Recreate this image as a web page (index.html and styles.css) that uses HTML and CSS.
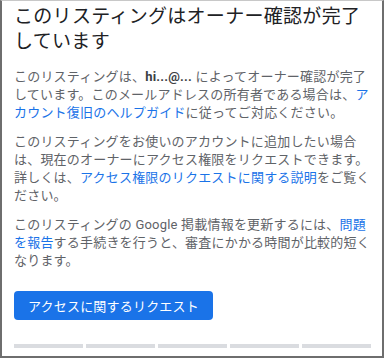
FILE: index.html
```html
<!DOCTYPE html>
<html lang="ja">
<head>
  <meta charset="UTF-8">
  <meta name="viewport" content="width=device-width, initial-scale=1.0">
  <title>オーナー確認</title>
  <link rel="stylesheet" href="styles.css">
</head>
<body>
  <div class="card">
    <h1 class="title">このリスティングはオーナー確認が完了しています</h1>

    <p class="text">このリスティングは、<b>hi...@...</b> によってオーナー確認が完了しています。このメールアドレスの所有者である場合は、<a href="#">アカウント復旧のヘルプガイド</a>に従ってご対応ください。</p>

    <p class="text">このリスティングをお使いのアカウントに追加したい場合は、現在のオーナーにアクセス権限をリクエストできます。詳しくは、<a href="#">アクセス権限のリクエストに関する説明</a>をご覧ください。</p>

    <p class="text">このリスティングの Google 掲載情報を更新するには、<a href="#">問題を報告</a>する手続きを行うと、審査にかかる時間が比較的短くなります。</p>

    <button class="request-btn">アクセスに関するリクエスト</button>

    <!-- 下部のステップ表示 -->
    <div class="steps">
      <span></span><span></span><span></span><span></span><span></span>
    </div>
  </div>
</body>
</html>
```

FILE: styles.css
```css
body {
  margin: 0;
  font-family: Roboto, "Noto Sans CJK JP", sans-serif;
  background: #fff;
}
.card {
  width: 384px;
  height: 358px;
  box-sizing: border-box;
  border: 2px solid #6e6e6e;
  border-top: 1px solid #c8c8c8;
  padding: 0 11px 0 12px;
  overflow: hidden;
}
.title {
  margin: 3px 0 14px;
  font-size: 19px;
  font-weight: 400;
  line-height: 25px;
  letter-spacing: 0.3px;
  color: #202124;
}
.text {
  margin: 0 0 11px;
  font-size: 13px;
  line-height: 18px;
  letter-spacing: 0.2px;
  color: #5f6368;
}
.text b {
  color: #3c4043;
}
.text a {
  color: #1a73e8;
  text-decoration: none;
}
.request-btn {
  display: block;
  margin-top: 21px;
  height: 29px;
  padding: 0 14px;
  border: none;
  border-radius: 4px;
  background: #1a73e8;
  color: #fff;
  font-family: inherit;
  font-size: 13px;
  letter-spacing: 0.2px;
}
.steps {
  display: flex;
  gap: 3px;
  margin-top: 24px;
}
.steps span {
  flex: 1;
  height: 4px;
  background: #dadce0;
}
```
